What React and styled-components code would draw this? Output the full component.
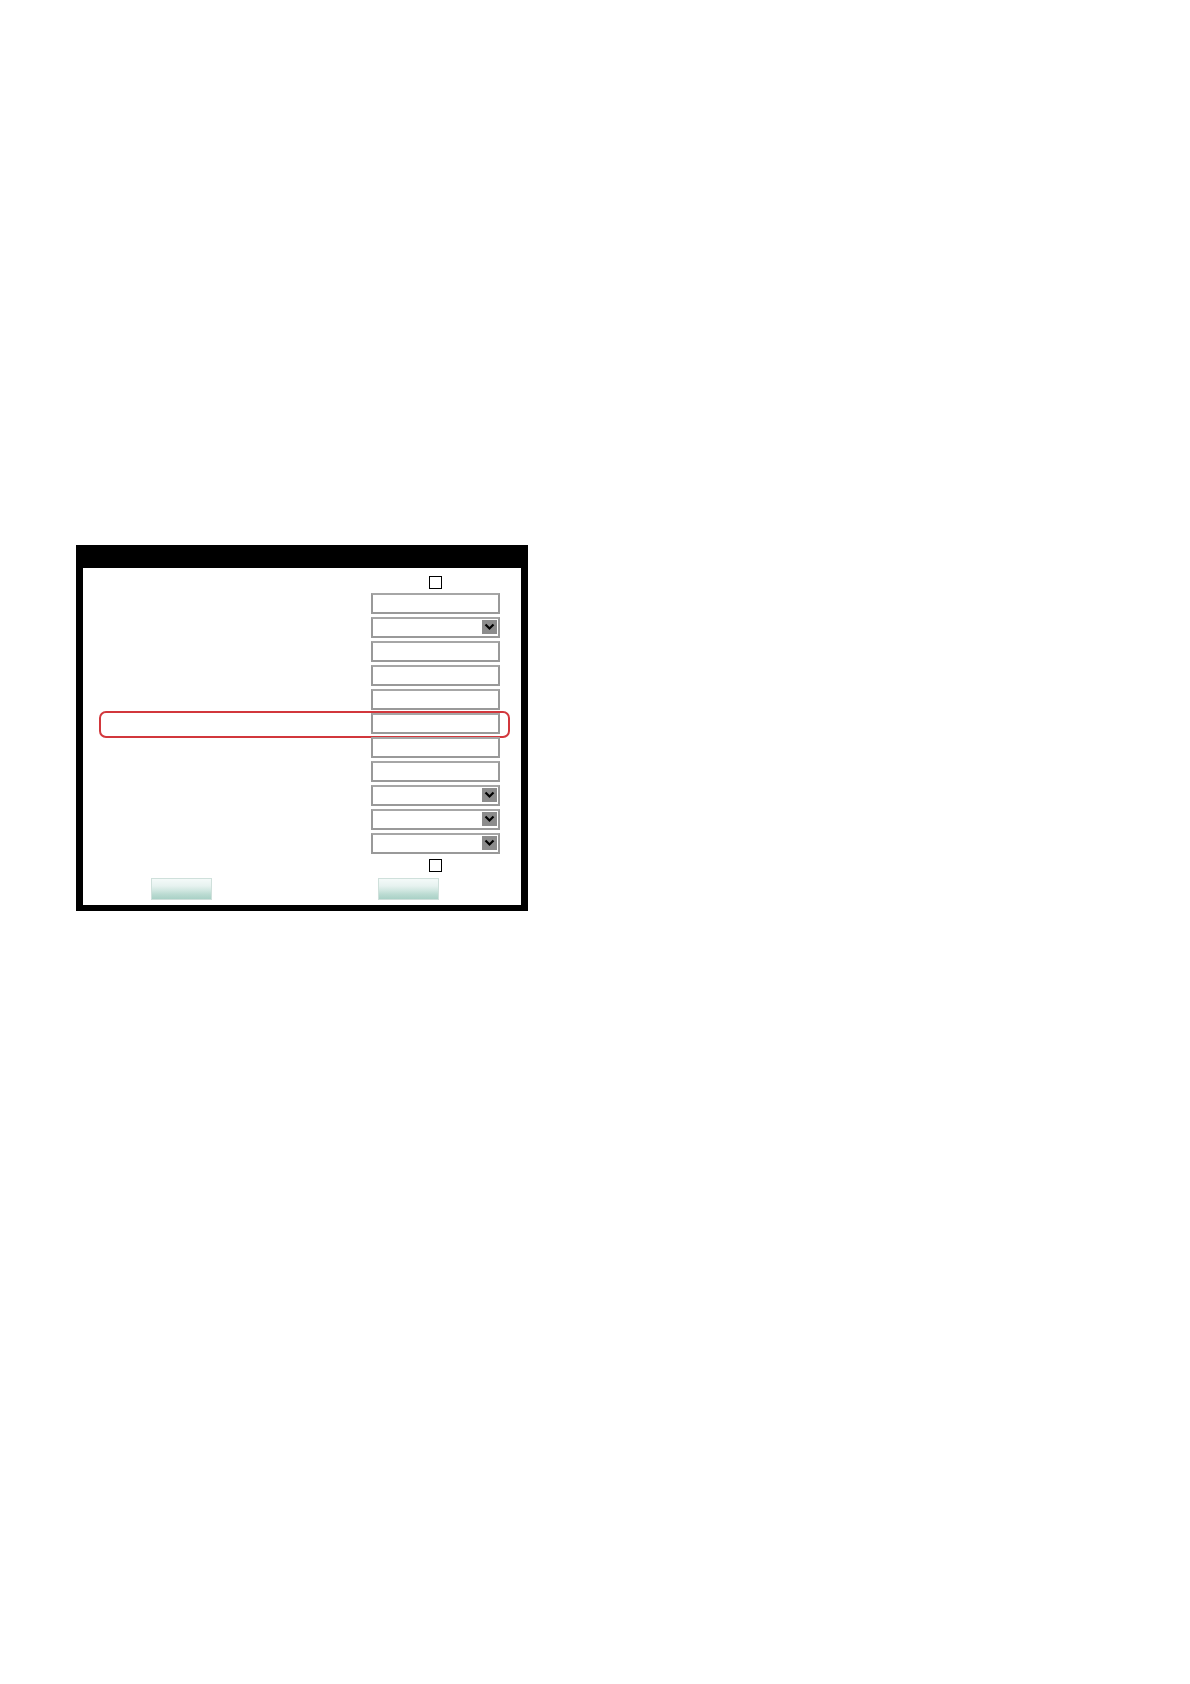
import React from "react";
import styled, { createGlobalStyle } from "styled-components";

const Global = createGlobalStyle`
  html, body {
    margin: 0;
    padding: 0;
    background: #fff;
    font-family: "Liberation Sans", Arial, sans-serif;
  }
`;

const Page = styled.div`
  padding: 545px 0 0 76px;
  min-height: 1684px;
  box-sizing: border-box;
`;

const Frame = styled.div`
  width: 452px;
  box-sizing: border-box;
  border-style: solid;
  border-color: #000;
  border-width: 23px 7px 6px 7px;
  background: #fff;
  padding-top: 1px;
`;

const Row = styled.div`
  position: relative;
  display: grid;
  grid-template-columns: 1fr 129px;
  padding-right: 21px;
  height: ${(p) => p.$h || 24}px;
  align-items: ${(p) => p.$align || "start"};
`;

const Label = styled.div`
  font-size: 12px;
  color: #000;
`;

const Cell = styled.div`
  display: flex;
  justify-content: center;
  align-items: ${(p) => p.$align || "flex-start"};
  height: 100%;
  padding-bottom: ${(p) => p.$pb || 0}px;
  padding-top: ${(p) => p.$pt || 0}px;
  box-sizing: border-box;
`;

const Check = styled.span`
  display: block;
  width: 13px;
  height: 13px;
  box-sizing: border-box;
  border: 1.5px solid #000;
  background: #fff;
`;

const Field = styled.div`
  width: 129px;
  height: 21px;
  box-sizing: border-box;
  border: 2px solid #999;
  border-top-color: #a6a6a6;
  background: #fff;
  position: relative;
`;

const Arrow = styled.span`
  position: absolute;
  right: 1px;
  top: 1px;
  width: 15px;
  height: 14px;
  background: #8c8c8c;
  display: flex;
  align-items: center;
  justify-content: center;
`;

const Highlight = styled.div`
  position: absolute;
  left: 16px;
  right: 11px;
  top: -2px;
  height: 27px;
  box-sizing: border-box;
  border: 2px solid #d2373c;
  border-radius: 7px;
  pointer-events: none;
`;

const ButtonRow = styled.div`
  display: grid;
  grid-template-columns: 68px 61px 166px 61px 1fr;
  padding: 2px 0 5px;
`;

const Btn = styled.button`
  grid-column: ${(p) => p.$col};
  width: 61px;
  height: 22px;
  padding: 0;
  border: 1px solid #cfe0db;
  background: linear-gradient(
    to bottom,
    #f4faf9 0%,
    #e6f2ef 35%,
    #d2e8e2 55%,
    #bcdcd3 75%,
    #a9d1c6 100%
  );
`;

const Chevron = () => (
  <svg width="11" height="8" viewBox="0 0 11 8">
    <path d="M1.5 1.5 L5.5 5.5 L9.5 1.5" fill="none" stroke="#000" strokeWidth="2.2" />
  </svg>
);

const rows = [
  "input",
  "select",
  "input",
  "input",
  "input",
  "input",
  "input",
  "input",
  "select",
  "select",
  "select",
];

export default function App() {
  return (
    <Page>
      <Global />
      <Frame>
        <Row $h={24}>
          <Label />
          <Cell $align="flex-end" $pb={4}>
            <Check />
          </Cell>
        </Row>
        {rows.map((kind, i) => (
          <Row key={i}>
            <Label />
            <Cell>
              <Field>
                {kind === "select" && (
                  <Arrow>
                    <Chevron />
                  </Arrow>
                )}
              </Field>
            </Cell>
            {i === 5 && <Highlight />}
          </Row>
        ))}
        <Row $h={19}>
          <Label />
          <Cell $pt={2}>
            <Check />
          </Cell>
        </Row>
        <ButtonRow>
          <Btn $col={2} type="button" />
          <Btn $col={4} type="button" />
        </ButtonRow>
      </Frame>
    </Page>
  );
}
